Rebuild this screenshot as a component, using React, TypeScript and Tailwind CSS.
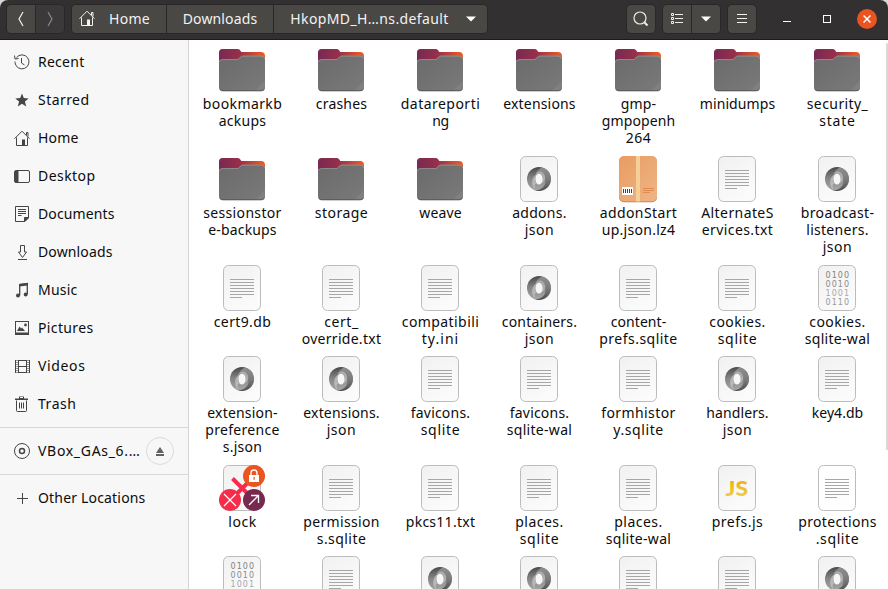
import { useLayoutEffect, useRef, useState } from "react";

// Spreads letters so that a label takes a given width in the UI font.
function Label({ text, width, className = "" }: { text: string; width: number; className?: string }) {
  const ref = useRef<HTMLSpanElement>(null);
  const [spacing, setSpacing] = useState(0);
  useLayoutEffect(() => {
    if (ref.current) {
      const natural = ref.current.getBoundingClientRect().width;
      setSpacing((width + 1.5 - natural) / text.length);
    }
  }, []);
  return (
    <span ref={ref} className={`inline-block whitespace-pre ${className}`} style={{ letterSpacing: spacing }}>
      {text}
    </span>
  );
}

type Kind = "folder" | "text" | "blank" | "json" | "bin" | "lz4" | "js" | "lock";
type Line = [string, number];
type Item = { kind: Kind; lines: Line[] };
const f = (kind: Kind, ...lines: Line[]): Item => ({ kind, lines });

const items: Item[] = [
  f("folder", ["bookmarkb", 78], ["ackups", 46]),
  f("folder", ["crashes", 50]),
  f("folder", ["datareporti", 78], ["ng", 15]),
  f("folder", ["extensions", 71]),
  f("folder", ["gmp-", 34], ["gmpopenh", 72], ["264", 24]),
  f("folder", ["minidumps", 74]),
  f("folder", ["security_", 60], ["state", 35]),

  f("folder", ["sessionstor", 77], ["e-backups", 67]),
  f("folder", ["storage", 52]),
  f("folder", ["weave", 41]),
  f("json", ["addons.", 53], ["json", 28]),
  f("lz4", ["addonStart", 76], ["up.json.lz4", 72]),
  f("text", ["AlternateS", 71], ["ervices.txt", 70]),
  f("json", ["broadcast-", 72], ["listeners.", 61], ["json", 28]),

  f("text", ["cert9.db", 56]),
  f("text", ["cert_", 33], ["override.txt", 78]),
  f("text", ["compatibili", 76], ["ty.ini", 36]),
  f("json", ["containers.", 74], ["json", 28]),
  f("text", ["content-", 54], ["prefs.sqlite", 77]),
  f("text", ["cookies.", 55], ["sqlite", 38]),
  f("bin", ["cookies.", 55], ["sqlite-wal", 64]),

  f("json", ["extension-", 69], ["preference", 73], ["s.json", 38]),
  f("json", ["extensions.", 75], ["json", 28]),
  f("text", ["favicons.", 58], ["sqlite", 38]),
  f("text", ["favicons.", 58], ["sqlite-wal", 64]),
  f("text", ["formhistor", 73], ["y.sqlite", 49]),
  f("json", ["handlers.", 61], ["json", 28]),
  f("text", ["key4.db", 50]),

  f("lock", ["lock", 27]),
  f("text", ["permission", 75], ["s.sqlite", 48]),
  f("text", ["pkcs11.txt", 68]),
  f("text", ["places.", 47], ["sqlite", 38]),
  f("text", ["places.", 47], ["sqlite-wal", 64]),
  f("js", ["prefs.js", 50]),
  f("blank", ["protections", 77], [".sqlite", 42]),

  f("bin"),
  f("text"),
  f("json"),
  f("json"),
  f("text"),
  f("text"),
  f("json"),
];

const bits = ["0100", "0010", "1001", "0110"];
const bitTone = ["#828282", "#8b8b8b", "#a8a8a8", "#989898"];

function Defs() {
  return (
    <svg width="0" height="0" className="absolute">
      <defs>
        <linearGradient id="back" x1="0" y1="0" x2="1" y2="0">
          <stop offset="0" stopColor="#772953" />
          <stop offset="0.45" stopColor="#97304a" />
          <stop offset="0.6" stopColor="#b03c40" />
          <stop offset="1" stopColor="#f15d22" />
        </linearGradient>
        <linearGradient id="front" x1="0" y1="0" x2="1" y2="1">
          <stop offset="0" stopColor="#6a6a6a" />
          <stop offset="1" stopColor="#7a7a7a" />
        </linearGradient>
        <linearGradient id="paper" x1="0" y1="0" x2="0.6" y2="1">
          <stop offset="0" stopColor="#f1f1f1" />
          <stop offset="1" stopColor="#fbfbfb" />
        </linearGradient>
        <linearGradient id="box" x1="0" y1="0" x2="1" y2="1">
          <stop offset="0" stopColor="#e99c62" />
          <stop offset="1" stopColor="#efb585" />
        </linearGradient>
        <linearGradient id="swirlA" x1="0.3" y1="0" x2="0.4" y2="1">
          <stop offset="0" stopColor="#484848" />
          <stop offset="0.45" stopColor="#858585" />
          <stop offset="1" stopColor="#a8a8a8" />
        </linearGradient>
        <linearGradient id="swirlB" x1="0.6" y1="0" x2="0.6" y2="1">
          <stop offset="0" stopColor="#8e8e8e" />
          <stop offset="0.5" stopColor="#7c7c7c" />
          <stop offset="1" stopColor="#4f4f4f" />
        </linearGradient>
        <linearGradient id="gold" x1="0" y1="0" x2="0" y2="1">
          <stop offset="0.3" stopColor="#ecb40f" />
          <stop offset="1" stopColor="#f3cf5c" />
        </linearGradient>
      </defs>
    </svg>
  );
}

function FileIcon({ kind }: { kind: Kind }) {
  if (kind === "folder")
    return (
      <svg width="48" height="48" viewBox="0 0 48 48">
        <path d="M4.500 3h15.500q1.500 0 2.300 1.500l1 1.500H43q4 0 4 4v30H1V6.500q0-3.500 3.500-3.500z" fill="url(#back)" />
        <path d="M1 41v.500q0 4 4 4h38q4 0 4-4V41z" fill="#000" opacity=".22" />
        <path d="M4.500 13.300h14.500q1.400 0 2.200-1l1.400-1.600q.8-.9 2-.9H43q4 0 4 4V41q0 4-4 4H5q-4 0-4-4V16.800q0-3.500 3.500-3.500z" fill="url(#front)" />
        <path d="M1.300 16q.2-2.400 3.200-2.400h14.500q1.400 0 2.200-1l1.400-1.600q.8-.9 2-.9H43q3.500 0 3.700 3" fill="none" stroke="#989898" strokeWidth=".8" />
        <path d="M37 45l10-10v6q0 4-4 4z" fill="#808080" />
        <path d="M2 43.300q1 1.400 3 1.400h38q2 0 3-1.400" fill="none" stroke="#4d4d4d" strokeWidth=".7" />
      </svg>
    );
  if (kind === "lz4")
    return (
      <svg width="48" height="48" viewBox="0 0 48 48">
        <rect x="5" y="1.500" width="38" height="45.800" rx="5" fill="#b9794b" />
        <rect x="5" y="1" width="38" height="45.500" rx="5" fill="url(#box)" />
        <rect x="22" y="1" width="4" height="45.500" fill="#f4cf96" />
        <rect x="8" y="32" width="11" height="8" fill="#fff" />
        <path d="M9.500 34v4M11.500 34v4M13.500 34v4M15.500 34v4M17.500 34v4" stroke="#444" strokeWidth="1" />
        <path d="M29 33.500h11M29 35.500h11M29 37.500h7" stroke="#d98347" strokeWidth=".8" />
      </svg>
    );
  return (
    <svg width="48" height="48" viewBox="0 0 48 48">
      <rect x="5.500" y="1.500" width="37" height="45" rx="5" fill={kind === "blank" ? "#fefefe" : "url(#paper)"} stroke="#bcbcbc" />
      {(kind === "text" || kind === "blank") && (
        <path d="M12 15.500h24M12 18.500h24M12 21.500h24M12 24.500h24M12 27.500h24M12 30.500h24M12 33.500h12" stroke="#a6a6a6" strokeWidth="1" />
      )}
      {kind === "json" && (
        <g transform="translate(24 24)">
          <circle r="12" fill="url(#swirlA)" />
          <path d="M3-11.600A12 12 0 0 1 12 0A12 12 0 0 1-4 11.300C5 11 9 4 5-2C3-6-1-6-4-4C-3-8 0-10 3-11.600z" fill="url(#swirlB)" />
          <path d="M-3-4.500C-8-1-8 6-4 10.500C-5 6-4 4-2 5.500C-5 2-4-3-1-6z" fill="#d0d0d0" opacity=".6" />
          <path d="M3 4.500C8 1 7-5 2-7.500C-1-8-3-6-3-4.500C0-7 3-5 3.500-2z" fill="#d0d0d0" opacity=".55" />
          <ellipse cx="0" cy="0" rx="3.600" ry="5.600" fill="#f6f6f6" />
        </g>
      )}
      {kind === "bin" &&
        bits.map((row, i) => (
          <text key={i} x="12.500" y={14 + i * 9} textLength="23.500" fontSize="8" fontFamily="DejaVu Sans, sans-serif" fill={bitTone[i]}>
            {row}
          </text>
        ))}
      {kind === "js" && (
        <text x="12.500" y="31.500" textLength="22.500" lengthAdjust="spacingAndGlyphs" fontSize="21" fontWeight="900" fontFamily="Lato, sans-serif" fill="url(#gold)">
          JS
        </text>
      )}
      {kind === "lock" && (
        <g fill="none">
          <path d="M14.500 14.500L34 34M34 14.500L14.500 34" stroke="#f72c4a" strokeWidth="4" />
          <circle cx="36" cy="12" r="11" fill="#e95420" />
          <rect x="31" y="11" width="10" height="7" fill="#fff" />
          <path d="M33 11V9a3 3 0 0 1 6 0v2" stroke="#fff" strokeWidth="1.300" />
          <rect x="35.500" y="13" width="1.200" height="2.800" fill="#e95420" />
          <circle cx="12" cy="36" r="11" fill="#f42d4b" />
          <path d="M6 30l12 12M18 30L6 42" stroke="#fff" strokeWidth="1.200" />
          <circle cx="36" cy="36" r="11" fill="#77294f" />
          <path d="M31 41l9.500-9.500M33 31.500h7.500V39" stroke="#fff" strokeWidth="1.300" />
        </g>
      )}
    </svg>
  );
}

function House() {
  return (
    <>
      <path d="M.5 8.700L8 1.200l7.500 7.500M2.500 7.500v8h11v-8M12.500 5V2.500h1.500V6.500" />
      <path d="M8 9.500h3v6H8z" fill="currentColor" stroke="none" />
    </>
  );
}

const places: { name: string; width: number; icon: React.ReactNode }[] = [
  {
    name: "Recent", width: 45,
    icon: <><path d="M2.500 3.500A7 7 0 1 1 1 8.500" /><path d="M1 7.500v1M.5 1.500l.5 3.500 3.500-.5" /><path d="M7.500 4v5l3 2" /></>,
  },
  {
    name: "Starred", width: 50,
    icon: <path d="M8 1.500l1.800 4.500 4.900.4-3.800 3.100 1.300 4.900L8 11.700l-4.200 2.700L5.100 9.500 1.300 6.400 6.200 6z" fill="currentColor" stroke="none" />,
  },
  { name: "Home", width: 39, icon: <House /> },
  {
    name: "Desktop", width: 56,
    icon: <><rect x=".5" y="2.500" width="15" height="12" rx="1.500" /><path d="M1 3h3.500v11.500H1z" fill="currentColor" stroke="none" /></>,
  },
  {
    name: "Documents", width: 75,
    icon: <><path d="M1.500.5h13v11.500l-3.500 3.500H1.500z" /><path d="M4 3.500h8M4 5.500h8M4 7.500h8M4 9.500h3.500" /><path d="M10.500 15.500v-4h4z" fill="currentColor" /></>,
  },
  {
    name: "Downloads", width: 73,
    icon: <path d="M6.500 1.500h4v6.500h2L8.500 13.500 4.500 8h2zM4 15.500h9" />,
  },
  {
    name: "Music", width: 38,
    icon: <><path d="M5.700 13.500V2.500L13.300 1.500V12" strokeWidth="1.300" /><path d="M5 2l9-1v2.500l-9 1z" fill="currentColor" stroke="none" /><circle cx="4" cy="13.500" r="2" fill="currentColor" stroke="none" /><circle cx="11.700" cy="12.500" r="2" fill="currentColor" stroke="none" /></>,
  },
  {
    name: "Pictures", width: 54,
    icon: <><rect x="1.500" y="1.500" width="13" height="13" /><path d="M3 11l2.500-4.500 1.500 2 1-1 3 3.500zM1 12.500h14V15H1z" fill="currentColor" stroke="none" /><circle cx="11.500" cy="5" r="1.400" fill="currentColor" stroke="none" /></>,
  },
  {
    name: "Videos", width: 46,
    icon: <><path d="M4.500 2v13M12.500 2v13M4.500 2.500h8M4.500 8.500h8M4.500 14.500h8" /><path d="M1.500 2v13M15.500 2v13" /><path d="M3 2v13M14 2v13" strokeDasharray="1 1" strokeWidth="2" opacity=".55" /></>,
  },
  {
    name: "Trash", width: 37,
    icon: <><path d="M2.500 4.500v10q0 1 1 1h8q1 0 1-1v-10" /><path d="M1 4V2.500h4V.5h5v2h4V4z" fill="currentColor" stroke="none" /><path d="M6 1.500h3" stroke="#f7f7f7" /><path d="M5.500 6.500v6M7.500 6.500v6M9.500 6.500v6" /></>,
  },
];

function SideIcon({ children }: { children: React.ReactNode }) {
  return (
    <svg width="16" height="16" viewBox="0 0 16 16" className="shrink-0 text-[#454545]" fill="none" stroke="currentColor">
      {children}
    </svg>
  );
}

const btn = "flex items-center bg-[#4a4845] border-[#292727]";

export default function App() {
  return (
    <div className="h-[589px] w-[888px] overflow-hidden bg-[#d8d8d8] font-['Noto_Sans',sans-serif] text-[14px] leading-[17px] text-[#0c0c0c]">
      <Defs />
      <div className="flex h-full flex-col overflow-hidden rounded-t-[8px]">
        <header className="flex h-10 shrink-0 items-start border-b border-[#1d1b1b] bg-[#333031] pt-1 pl-1.5 text-[#f2f2f1]">
          <div className="flex h-[30px] w-[59px] overflow-hidden rounded-[5px] border border-[#292727]">
            <div className={`w-[29px] justify-center border-r ${btn}`}>
              <svg width="8" height="16" fill="none" stroke="#f2f2f2" strokeWidth="1.200"><path d="M6 1L2 8l4 7" /></svg>
            </div>
            <div className="flex w-7 items-center justify-center bg-[#3b3939]">
              <svg width="8" height="16" fill="none" stroke="#8c8a89" strokeWidth="1.200"><path d="M2 1l4 7-4 7" /></svg>
            </div>
          </div>
          <div className="ml-1.5 flex h-[30px] w-[417px] overflow-hidden rounded-[5px] border border-[#292727]">
            <div className={`w-[95px] gap-3.5 border-r pl-[7px] ${btn}`}>
              <svg width="16" height="16" viewBox="0 0 16 16" fill="none" stroke="currentColor" className="-mt-0.5"><House /></svg>
              <Label text="Home" width={39.5} className="pb-0.5" />
            </div>
            <div className={`w-[107px] justify-center border-r ${btn}`}><Label text="Downloads" width={73} className="pb-0.5" /></div>
            <div className={`flex-1 justify-center gap-[17px] pl-[5px] ${btn}`}>
              <Label text="HkopMD_H…ns.default" width={157} className="pb-0.5" />
              <svg width="10" height="6"><path d="M0 .5h10L5 5.500z" fill="#fff" /></svg>
            </div>
          </div>
          <div className={`ml-[138px] h-[30px] w-[30px] justify-center rounded-[5px] border ${btn}`}>
            <svg width="16" height="16" fill="none" stroke="#eee" strokeWidth="1.200"><circle cx="7" cy="7" r="6" /><path d="M11.500 11.500l3 3" strokeWidth="2" /></svg>
          </div>
          <div className="ml-1.5 flex h-[30px] w-[59px] overflow-hidden rounded-[5px] border border-[#292727]">
            <div className={`w-[29px] justify-center border-r ${btn}`}>
              <svg width="14" height="14" fill="none" stroke="#eee"><path d="M1.500 1.500h2v2h-2zM1.500 5.500h2v2h-2zM1.500 9.500h2v2h-2zM5 2.500h8M5 6.500h8M5 10.500h8" /></svg>
            </div>
            <div className={`w-7 justify-center ${btn}`}><svg width="10" height="6"><path d="M0 .5h10L5 5.500z" fill="#fff" /></svg></div>
          </div>
          <div className={`ml-1.5 h-[30px] w-[30px] justify-center rounded-[5px] border ${btn}`}>
            <svg width="10" height="10" stroke="#f2f2f2"><path d="M0 .5h10M0 4.500h10M0 8.500h10" /></svg>
          </div>
          <div className="mt-[17px] ml-[26px] h-px w-2 bg-white" />
          <div className="mt-[11px] ml-8 h-2 w-2 border border-white" />
          <div className="mt-[5px] ml-[26px] flex h-5 w-5 items-center justify-center rounded-full bg-[#e95420]">
            <svg width="8" height="8" stroke="#fff" strokeWidth="1.500"><path d="M.5 .5l7 7M7.500 .5l-7 7" /></svg>
          </div>
        </header>
        <div className="flex min-h-0 flex-1">
          <aside className="w-[189px] shrink-0 border-r border-[#d4d4d4] bg-[#f7f7f7] pt-[3px]">
            {places.map((p) => (
              <div key={p.name} className="flex h-[38px] items-center gap-2 pl-3.5">
                <SideIcon>{p.icon}</SideIcon>
                <Label text={p.name} width={p.width} className="pb-0.5" />
              </div>
            ))}
            <div className="mt-1 flex h-12 items-center justify-between border-y border-[#d9d9d9] pr-3.5 pl-3.5">
              <div className="flex items-center gap-2">
                <SideIcon><circle cx="8" cy="8" r="7.500" /><circle cx="8" cy="8" r="2.500" strokeWidth="1.500" /></SideIcon>
                <Label text="VBox_GAs_6.…" width={101} className="pb-0.5" />
              </div>
              <div className="flex h-7 w-7 items-center justify-center rounded-full border border-[#dcdcdc]">
                <svg width="8" height="9" fill="#636363"><path d="M4 0l4 6H0zM0 7h8v2H0z" /></svg>
              </div>
            </div>
            <div className="mt-[4px] flex h-[38px] items-center gap-2 pl-3.5">
              <SideIcon><path d="M8.500 3v11M3 8.500h11" /></SideIcon>
              <Label text="Other Locations" width={106} className="pb-0.5" />
            </div>
          </aside>
          <main className="grid min-w-0 flex-1 grid-cols-[99px_99px_99px_99px_99px_99px_101px] grid-rows-[109px_109px_91px_109px_91px_91px] overflow-hidden bg-white pt-[6px] pl-[3px]">
            {items.map((item, i) => (
              <div key={i} className="flex flex-col items-center">
                <div className="mb-px ml-px h-12"><FileIcon kind={item.kind} /></div>
                <div className="flex flex-col items-center pl-[2px]">
                  {item.lines.map(([text, width]) => (
                    <Label key={text} text={text} width={width} />
                  ))}
                </div>
              </div>
            ))}
          </main>
          <div className="w-0.5 shrink-0 bg-white pt-[3px]">
            <div className="h-[407px] rounded-t-sm bg-[#d9d9d9]" />
          </div>
        </div>
      </div>
    </div>
  );
}
